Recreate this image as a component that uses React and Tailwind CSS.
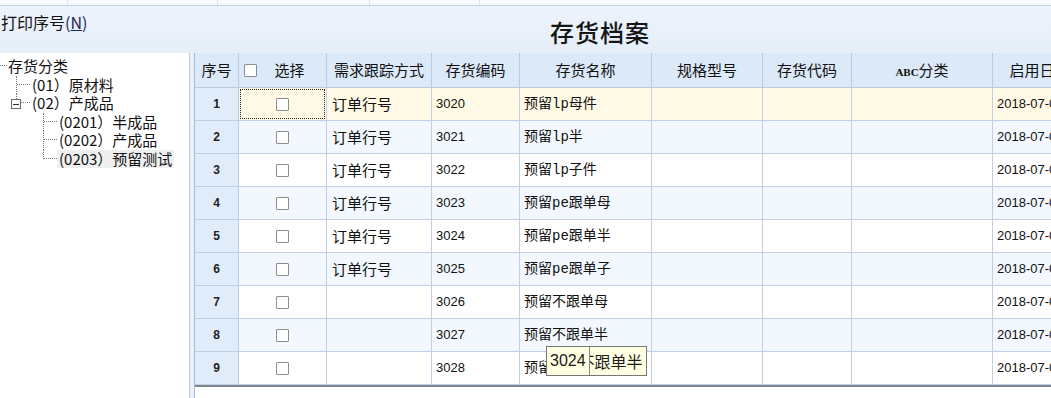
const cols = [
  { key: "no", title: "序号", w: "w-[44px]" },
  { key: "sel", title: "选择", w: "w-[88px]" },
  { key: "track", title: "需求跟踪方式", w: "w-[105px]" },
  { key: "code", title: "存货编码", w: "w-[88px]" },
  { key: "name", title: "存货名称", w: "w-[132px]" },
  { key: "spec", title: "规格型号", w: "w-[111px]" },
  { key: "alias", title: "存货代码", w: "w-[89px]" },
  { key: "abc", title: "ABC分类", w: "w-[141px]" },
  { key: "date", title: "启用日期", w: "w-[94px]" },
];

const rows = [
  { track: "订单行号", code: "3020", name: "预留lp母件" },
  { track: "订单行号", code: "3021", name: "预留lp半" },
  { track: "订单行号", code: "3022", name: "预留lp子件" },
  { track: "订单行号", code: "3023", name: "预留pe跟单母" },
  { track: "订单行号", code: "3024", name: "预留pe跟单半" },
  { track: "订单行号", code: "3025", name: "预留pe跟单子" },
  { track: "", code: "3026", name: "预留不跟单母" },
  { track: "", code: "3027", name: "预留不跟单半" },
  { track: "", code: "3028", name: "预留pe不跟单子" },
];

const cjk = "font-['Noto_Sans_CJK_SC',sans-serif]";
const num = "font-['Liberation_Sans','Noto_Sans_CJK_SC',sans-serif]";
const mono = "font-['Liberation_Mono','Noto_Sans_CJK_SC',monospace]";

const CheckBox = () => (
  <span className="block w-[13px] h-[13px] border border-[#8d8d8d] bg-white rounded-[1px]" />
);

// ├ connector
const Tee = () => (
  <div className="w-[14px] h-full border-l border-dotted border-[#7a7a7a] shrink-0">
    <div className="h-1/2 border-b border-dotted border-[#7a7a7a]" />
  </div>
);

// └ connector
const Elbow = ({ box }) => (
  <div className="relative w-[14px] h-full shrink-0">
    <div className="h-1/2 border-l border-b border-dotted border-[#7a7a7a]" />
    {box && (
      <span className="absolute left-[-5px] top-[5px] w-[10px] h-[10px] border border-[#6a6a6a] bg-white flex items-center justify-center">
        <span className="block w-[6px] h-px bg-[#333]" />
      </span>
    )}
  </div>
);

const TreeRow = ({ indent, conn, children, selected }) => (
  <div className="flex h-[18.5px] items-stretch">
    <div className={indent} />
    {conn}
    <div className="flex items-center">
      <span
        className={`pl-[2px] pr-[2px] leading-[18px] text-[15px] text-[#111] whitespace-pre ${
          selected ? "bg-[#efefef]" : ""
        }`}
      >
        {children}
      </span>
    </div>
  </div>
);

export default function App() {
  return (
    <div className={`w-[1051px] h-[398px] overflow-hidden bg-[#e8f0fb] ${cjk}`}>
      {/* top strip */}
      <div className="flex h-[6px] bg-[#f6f9fd] border-b border-[#c3d3e6]">
        <div className="w-[68px] border-r border-[#dbe3ec]" />
        <div className="w-[150px] border-r border-[#dbe3ec]" />
        <div className="w-[152px] border-r border-[#dbe3ec]" />
        <div className="w-[110px] border-r border-[#dbe3ec]" />
      </div>

      {/* toolbar */}
      <div className="flex h-[47px] bg-linear-to-b from-[#edf3fc] to-[#e5eef9]">
        <div className="w-[194px] pl-[1px] pt-[4px] text-[16px] text-[#111]">
          打印序号<span className="text-[#1b2a55]">(<span className="underline">N</span>)</span>
        </div>
        <div className="pl-[356px] pt-[10px] text-[24px] leading-[32px] font-medium text-[#151515] tracking-[1px]">
          存货档案
        </div>
      </div>

      <div className="flex h-[345px]">
        {/* tree */}
        <div className="w-[190px] shrink-0 bg-white border-r border-[#c2c7cd] pt-[4px]">
          <div className="flex h-[18.5px] items-stretch">
            <div className="w-[7px] h-1/2 border-b border-dotted border-[#7a7a7a]" />
            <div className="flex items-center">
              <span className="pl-[1px] text-[15px] leading-[18px] text-[#111]">存货分类</span>
            </div>
          </div>
          <TreeRow indent="w-[16px]" conn={<Tee />}>(01）原材料</TreeRow>
          <TreeRow indent="w-[16px]" conn={<Elbow box />}>(02）产成品</TreeRow>
          <TreeRow indent="w-[43px]" conn={<Tee />}>(0201）半成品</TreeRow>
          <TreeRow indent="w-[43px]" conn={<Tee />}>(0202）产成品</TreeRow>
          <TreeRow indent="w-[43px]" conn={<Elbow />} selected>
            (0203）预留测试
          </TreeRow>
        </div>

        <div className="w-[4px] shrink-0" />

        {/* grid */}
        <div className="relative flex-1 overflow-hidden bg-white border-l border-[#a9bcd4]">
          <div className="w-max">
            <div className="flex h-[35px] bg-[#dce9f9] border-b border-[#b7cbe3]">
              {cols.map((c) => (
                <div
                  key={c.key}
                  className={`${c.w} shrink-0 border-r border-[#b7cbe3] flex items-center justify-center text-[15px] text-[#111] whitespace-nowrap`}
                >
                  {c.key === "sel" ? (
                    <div className="flex w-full items-center pl-[5px]">
                      <CheckBox />
                      <span className="flex-1 text-center pr-[4px]">选择</span>
                    </div>
                  ) : c.key === "abc" ? (
                    <span>
                      <span className="font-['Liberation_Serif',serif] text-[11px] font-bold">ABC</span>分类
                    </span>
                  ) : (
                    c.title
                  )}
                </div>
              ))}
            </div>

            {rows.map((r, i) => {
              const bg = i === 0 ? "bg-[#fff9e5]" : i % 2 === 1 ? "bg-[#f3f8fe]" : "bg-white";
              return (
                <div key={i} className={`flex h-[33px] border-b border-[#bfd0e6] ${bg}`}>
                  <div className={`w-[44px] shrink-0 border-r border-[#b7cbe3] bg-[#e1ecfa] flex items-center justify-center text-[12px] font-bold text-[#222] ${num}`}>
                    {i + 1}
                  </div>
                  <div className="w-[88px] shrink-0 border-r border-[#bfd0e6] p-[1px]">
                    <div
                      className={`h-full flex items-center justify-center ${
                        i === 0 ? "border border-dotted border-[#222]" : ""
                      }`}
                    >
                      <CheckBox />
                    </div>
                  </div>
                  <div className="w-[105px] shrink-0 border-r border-[#bfd0e6] flex items-center pl-[5px] text-[15px] text-[#111]">
                    {r.track}
                  </div>
                  <div className={`w-[88px] shrink-0 border-r border-[#bfd0e6] flex items-center pl-[4px] text-[13px] text-[#111] ${num}`}>
                    {r.code}
                  </div>
                  <div className={`w-[132px] shrink-0 border-r border-[#bfd0e6] flex items-center pl-[4px] text-[14px] text-[#111] whitespace-nowrap ${mono}`}>
                    {r.name}
                  </div>
                  <div className="w-[111px] shrink-0 border-r border-[#bfd0e6]" />
                  <div className="w-[89px] shrink-0 border-r border-[#bfd0e6]" />
                  <div className="w-[141px] shrink-0 border-r border-[#bfd0e6]" />
                  <div className={`w-[94px] shrink-0 border-r border-[#bfd0e6] flex items-center pl-[4px] text-[13px] text-[#111] whitespace-nowrap ${num}`}>
                    2018-07-01
                  </div>
                </div>
              );
            })}
            <div className="h-[2px] bg-[#7d858f]" />
          </div>

          {/* tooltip */}
          <div className="absolute left-[351px] top-[293px] h-[30px] flex items-center bg-[#ffffe1] border border-[#777] text-[16px] text-[#1a1a1a]">
            <span className={`px-[3px] ${num}`}>3024</span>
            <span className="h-full flex items-center border-l border-[#888] pr-[3px]">
              <span className="w-[5px] overflow-hidden flex justify-end">
                <span>不</span>
              </span>
              跟单半
            </span>
          </div>
        </div>
      </div>
    </div>
  );
}
